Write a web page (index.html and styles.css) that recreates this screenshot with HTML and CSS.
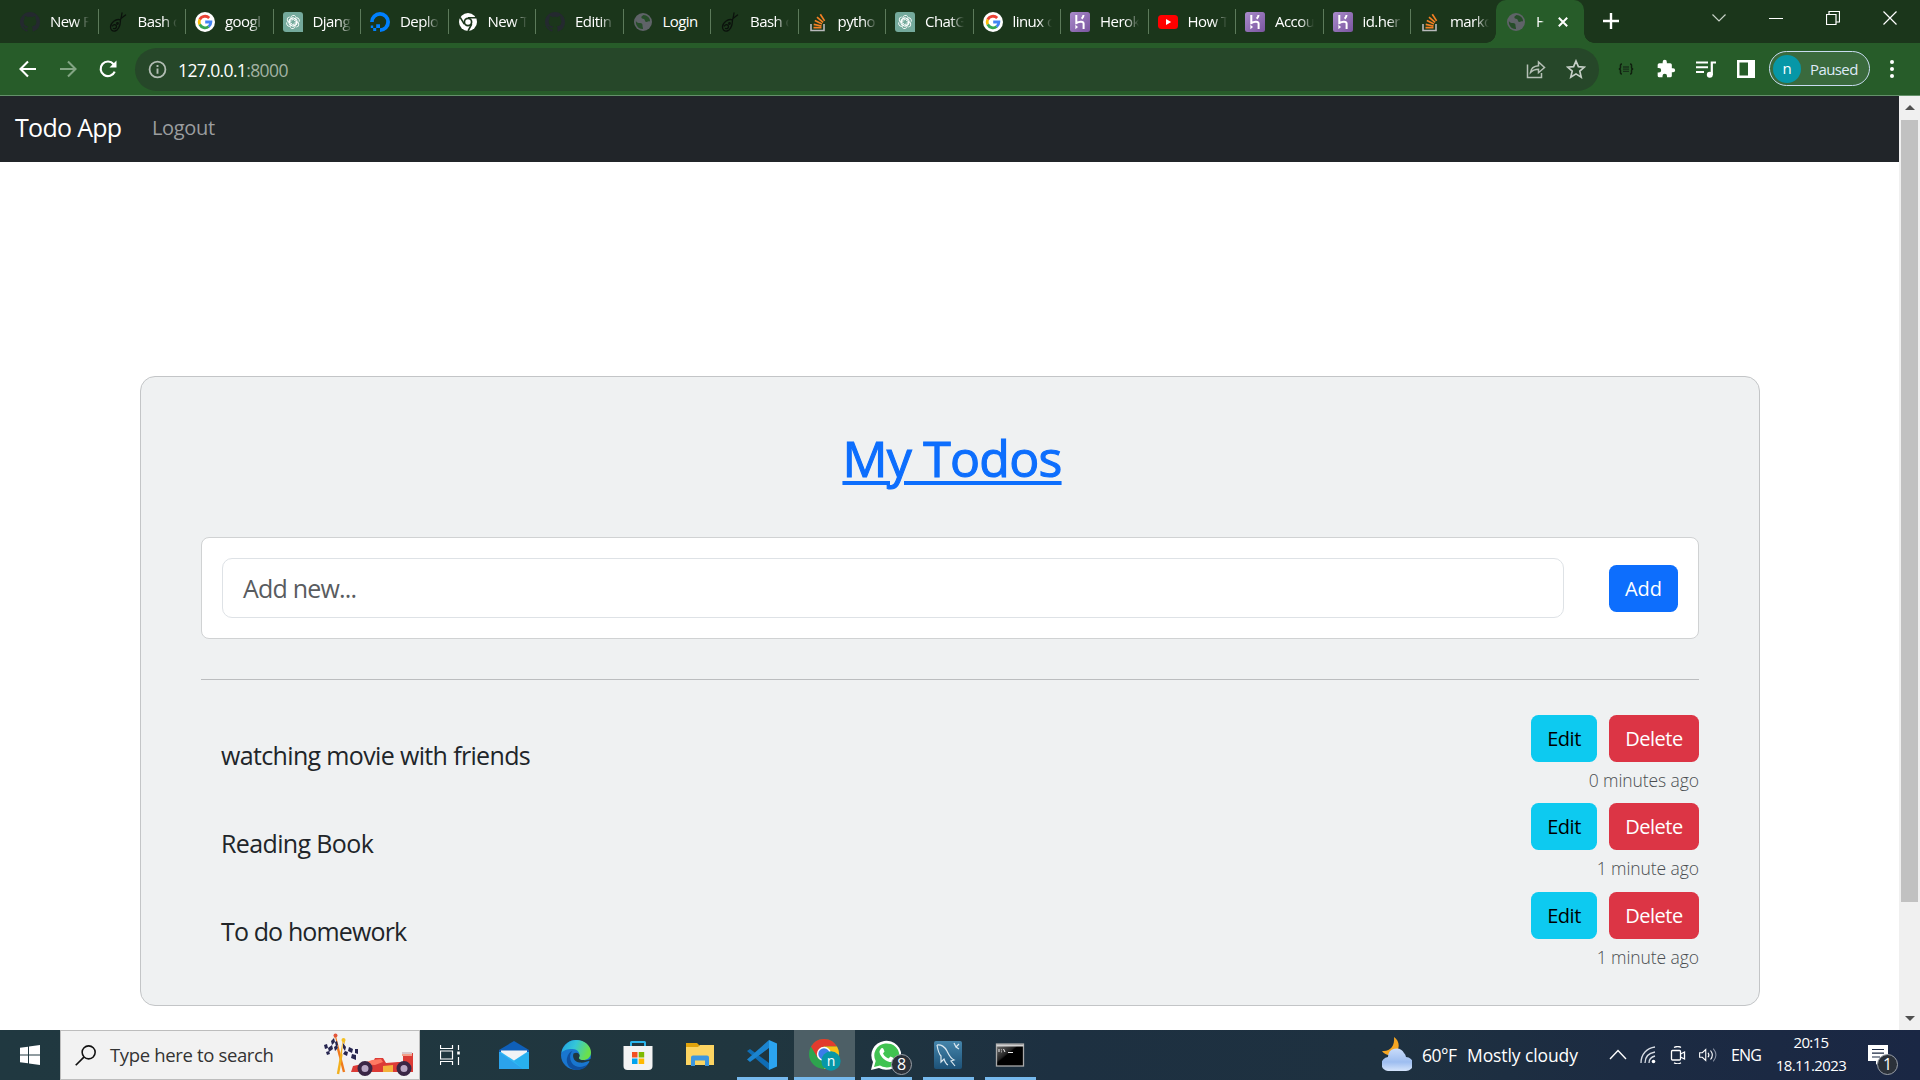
FILE: index.html
```html
<!DOCTYPE html>
<html lang="en">
<head>
<meta charset="utf-8">
<title>Home</title>
<link rel="stylesheet" href="styles.css">
</head>
<body>
<svg width="0" height="0" class="defs">
  <defs>
    <linearGradient id="gHk" x1="0" y1="0" x2="1" y2="1"><stop offset="0" stop-color="#a98bcb"/><stop offset="1" stop-color="#7a559f"/></linearGradient>
    <linearGradient id="gEdge" x1="0" y1="0" x2="1" y2="0.3"><stop offset="0" stop-color="#1f9fe0"/><stop offset=".5" stop-color="#35c6d8"/><stop offset="1" stop-color="#6be04a"/></linearGradient>
    <linearGradient id="gCloud" x1="0" y1="0" x2="0" y2="1"><stop offset="0" stop-color="#c9dcfa"/><stop offset=".6" stop-color="#9dbdf0"/><stop offset="1" stop-color="#d5e4fb"/></linearGradient>
    <linearGradient id="gMy" x1="0" y1="0" x2="0" y2="1"><stop offset="0" stop-color="#4585ab"/><stop offset="1" stop-color="#1d5278"/></linearGradient>
    <linearGradient id="gCmd" x1="0" y1="0" x2="1" y2="1"><stop offset="0" stop-color="#777"/><stop offset=".4" stop-color="#222"/><stop offset=".45" stop-color="#000"/></linearGradient>
    <symbol id="github" viewBox="0 0 16 16"><path fill="#24292f" d="M8 0C3.58 0 0 3.58 0 8c0 3.54 2.29 6.53 5.47 7.59.4.07.55-.17.55-.38 0-.19-.01-.82-.01-1.49-2.01.37-2.53-.49-2.69-.94-.09-.23-.48-.94-.82-1.13-.28-.15-.68-.52-.01-.53.63-.01 1.08.58 1.23.82.72 1.21 1.87.87 2.33.66.07-.52.28-.87.51-1.07-1.78-.2-3.64-.89-3.64-3.95 0-.87.31-1.59.82-2.15-.08-.2-.36-1.02.08-2.12 0 0 .67-.21 2.2.82.64-.18 1.32-.27 2-.27s1.36.09 2 .27c1.53-1.04 2.2-.82 2.2-.82.44 1.1.16 1.92.08 2.12.51.56.82 1.27.82 2.15 0 3.07-1.87 3.75-3.65 3.95.29.25.54.73.54 1.48 0 1.07-.01 1.93-.01 2.2 0 .21.15.46.55.38A8.01 8.01 0 0 0 16 8c0-4.42-3.58-8-8-8z"/></symbol>
    <symbol id="bash" viewBox="0 0 20 20"><g fill="none" stroke="#0b120c" stroke-width="1.3" stroke-linecap="round"><path d="M12.500 8C8 6 2.500 11 2.500 15c0 3 2 4.500 4.500 4s5.500-4 5.500-11M12.500 8c.5-2 1-3 1.500-7M13 6.500l4.500-3.500M4.500 14c1-2 4-1.500 4 .5s-1.500 2.500-3 2"/><circle cx="9.500" cy="11.500" r=".8"/></g></symbol>
    <symbol id="google" viewBox="0 0 20 20"><circle cx="10" cy="10" r="10" fill="#fff"/><g fill="none" stroke-width="2.8"><path stroke="#ea4335" d="M14.2 6A5.9 5.9 0 0 0 4.7 7.6"/><path stroke="#fbbc05" d="M4.7 7.5a5.9 5.9 0 0 0 0 5"/><path stroke="#34a853" d="M4.7 12.4a5.9 5.9 0 0 0 9 2.1"/><path stroke="#4285f4" d="M13.6 14.6A5.9 5.9 0 0 0 15.9 10H10.2"/></g></symbol>
    <symbol id="gpt" viewBox="0 0 20 20"><path d="M3 0h14a3 3 0 0 1 3 3v17H3a3 3 0 0 1-3-3V3a3 3 0 0 1 3-3z" fill="#74aa9c"/><g fill="none" stroke="#fff" stroke-width=".9"><path id="pe" d="M7.800 10V6.200a2.700 2.700 0 0 1 5-1.500M7.800 7.200l2.600-1.500 3.400 2"/><use href="#pe" transform="rotate(60 10 10)"/><use href="#pe" transform="rotate(120 10 10)"/><use href="#pe" transform="rotate(180 10 10)"/><use href="#pe" transform="rotate(240 10 10)"/><use href="#pe" transform="rotate(300 10 10)"/></g></symbol>
    <symbol id="ocean" viewBox="0 0 20 20"><path d="M10 18.1A8.1 8.1 0 1 0 1.9 10" fill="none" stroke="#0080ff" stroke-width="3.8"/><path fill="#0080ff" d="M6.2 12.2H10V16H6.2zM3.2 16h3v3h-3zM.8 13.6h2.4V16H.8z"/></symbol>
    <symbol id="chromeW" viewBox="0 0 20 20"><circle cx="10" cy="10" r="9" fill="#fff"/><circle cx="10" cy="10" r="3.6" fill="#fff" stroke="#1b361b" stroke-width="1.7"/><path d="M10 5.7h8M6.3 12.2 2.2 5.3M13.7 12.2 10 19" stroke="#1b361b" stroke-width="1.6"/></symbol>
    <symbol id="globe" viewBox="0 0 20 20"><circle cx="10" cy="10" r="9" fill="#5f6368"/><path d="M3 8.500c0 2 2 2.500 4 2.500s2.500 1 2.500 2.500.5 2 .5 3.500C5.500 17.500 2 13 3 8.500zM10.500 3c-1.500 1-2.500 1.500-2 3 .5 1 2.500.5 3 1.500s.5 2.500 2 2.500 2-1 3.500-.5C17.500 6 14 3 10.500 3z" fill="#264d29"/></symbol>
    <symbol id="so" viewBox="0 0 20 20"><path d="M3 12v6.5h13V12" fill="none" stroke="#b9babc" stroke-width="1.6"/><g stroke="#f48024" stroke-width="1.7"><path d="M5.5 15.6h8M5.7 12.3l7.8 1.7M6.8 8.6l7.2 3.4M9 5.2l6.1 5.2M12.3 2.3l4.3 6.6"/></g></symbol>
    <symbol id="heroku" viewBox="0 0 20 20"><rect width="20" height="20" rx="2.5" fill="url(#gHk)"/><path d="M6.3 3v8c2-1 7-2.5 7.3.5V17M13.5 3c0 1.5-.7 2.6-1.8 3.8" fill="none" stroke="#fff" stroke-width="2"/><path d="M5.4 12.8 8 15l-2.6 2.3z" fill="#fff"/></symbol>
    <symbol id="yt" viewBox="0 0 20 20"><rect y="3" width="20" height="14" rx="3.5" fill="#f00"/><path d="M8 7l5.2 3L8 13z" fill="#fff"/></symbol>
  </defs>
</svg>

<header class="tabs">
  <div class="tab"><svg><use href="#github"/></svg><span>New F</span></div>
  <div class="tab"><svg><use href="#bash"/></svg><span>Bash c</span></div>
  <div class="tab"><svg><use href="#google"/></svg><span>googl</span></div>
  <div class="tab"><svg><use href="#gpt"/></svg><span>Djang</span></div>
  <div class="tab"><svg><use href="#ocean"/></svg><span>Deplo</span></div>
  <div class="tab"><svg><use href="#chromeW"/></svg><span>New T</span></div>
  <div class="tab"><svg><use href="#github"/></svg><span>Editin</span></div>
  <div class="tab"><svg><use href="#globe"/></svg><span class="full">Login</span></div>
  <div class="tab"><svg><use href="#bash"/></svg><span>Bash c</span></div>
  <div class="tab"><svg><use href="#so"/></svg><span>pytho</span></div>
  <div class="tab"><svg><use href="#gpt"/></svg><span>ChatG</span></div>
  <div class="tab"><svg><use href="#google"/></svg><span>linux c</span></div>
  <div class="tab"><svg><use href="#heroku"/></svg><span>Herok</span></div>
  <div class="tab"><svg><use href="#yt"/></svg><span>How T</span></div>
  <div class="tab"><svg><use href="#heroku"/></svg><span>Accou</span></div>
  <div class="tab"><svg><use href="#heroku"/></svg><span>id.her</span></div>
  <div class="tab last"><svg><use href="#so"/></svg><span>markc</span></div>
  <div class="tab active"><svg><use href="#globe"/></svg><span>H</span><svg class="x" viewBox="0 0 10 10"><path d="M.8.8l8.4 8.4M9.200.8.8 9.200" stroke="#fff" stroke-width="2"/></svg></div>
  <svg class="plus" viewBox="0 0 16 16"><path d="M8 0v16M0 8h16" stroke="#fff" stroke-width="2.4"/></svg>
  <div class="winctl">
    <svg viewBox="0 0 14 14"><path d="M.5 3.500l6.500 6.500 6.500-6.500" fill="none" stroke="#c8d2c8" stroke-width="1.200"/></svg>
    <svg viewBox="0 0 14 14"><path d="M0 7.500h14" stroke="#fff"/></svg>
    <svg viewBox="0 0 14 14"><path d="M.5 3.500h9.500v10H.5zM3 3.500v-3h10.500v10.500H10" fill="none" stroke="#fff" stroke-width="1.200"/></svg>
    <svg viewBox="0 0 14 14"><path d="M.5.5l13 13M13.500.5l-13 13" stroke="#fff" stroke-width="1.200"/></svg>
  </div>
</header>

<div class="toolbar">
  <div class="navbtns">
    <svg viewBox="0 0 20 20"><path d="M18 10H3M10 2.500L2.500 10l7.500 7.500" fill="none" stroke="#fff" stroke-width="2.100"/></svg>
    <svg viewBox="0 0 20 20"><path d="M2 10h15M10 2.500L17.500 10 10 17.500" fill="none" stroke="#83a584" stroke-width="2.100"/></svg>
    <svg viewBox="0 0 20 20"><path d="M16.700 12.600A7.300 7.300 0 1 1 15.600 5.200" fill="none" stroke="#fff" stroke-width="2.200"/><path d="M18.500 1.500v7h-7z" fill="#fff"/></svg>
  </div>
  <div class="omni">
    <svg class="info" viewBox="0 0 18 18"><circle cx="9" cy="9" r="7.500" fill="none" stroke="#b2bdb4" stroke-width="1.700"/><path d="M9 8v5M9 4.800v1.800" stroke="#b2bdb4" stroke-width="1.800"/></svg>
    <span class="url">127.0.0.1<em>:8000</em></span>
    <svg class="share" viewBox="0 0 20 20"><path d="M1.500 5.500v13h14V14M4.500 13.500c.5-4 3-6.500 8-6.800V3l6 5.500-6 5.200v-3.500c-4 0-6 1-8 3.300z" fill="none" stroke="#b5c0b6" stroke-width="1.500"/></svg>
    <svg class="star" viewBox="0 0 20 20"><path d="M10 2l2.400 5.600 6 .5-4.600 4 1.400 6-5.200-3.200-5.200 3.200 1.400-6-4.600-4 6-.5z" fill="none" stroke="#c6cfc7" stroke-width="1.700"/></svg>
  </div>
  <div class="ext">
    <span class="json"><svg viewBox="0 0 16 12"><path d="M4 1C2 1 2.500 3 2.500 4.500S1.500 6 .8 6c.7 0 1.700 0 1.700 1.500S2 11 4 11M12 1c2 0 1.500 2 1.500 3.500s1 1.500 1.700 1.500c-.7 0-1.700 0-1.700 1.500S14 11 12 11" fill="none" stroke="#10200f" stroke-width="1.500"/><path d="M5 4h6M5 6.200h6M5 8.400h6" stroke="#18301a" stroke-width="1.300"/></svg></span>
    <svg viewBox="0 0 24 24"><path fill="#fff" d="M20.500 11H19V7a2 2 0 0 0-2-2h-4V3.500a2.500 2.500 0 0 0-5 0V5H4a2 2 0 0 0-2 2v3.800h1.500a2.700 2.700 0 0 1 0 5.400H2V20a2 2 0 0 0 2 2h3.800v-1.500a2.700 2.700 0 0 1 5.400 0V22H17a2 2 0 0 0 2-2v-4h1.500a2.500 2.500 0 0 0 0-5z"/></svg>
    <svg viewBox="0 0 20 20"><path d="M0 3.500h12M0 8.200h12M0 13h8" stroke="#fff" stroke-width="2"/><path d="M15.800 16V3.500H20" fill="none" stroke="#fff" stroke-width="2.200"/><circle cx="13.800" cy="15.800" r="3" fill="#fff"/></svg>
    <svg viewBox="0 0 20 20"><path fill="#fff" fill-rule="evenodd" d="M1 1h18v18H1zM3.500 3.500v13H12v-13z"/></svg>
  </div>
  <div class="pill"><b>n</b><span>Paused</span></div>
  <svg class="dots" viewBox="0 0 6 20"><circle cx="3" cy="3" r="2"/><circle cx="3" cy="10" r="2"/><circle cx="3" cy="17" r="2"/></svg>
</div>

<main class="view">
  <div class="page">
    <nav class="navbar"><a class="brand">Todo App</a><a class="logout">Logout</a></nav>
    <section class="card">
      <h1><u>My Todos</u></h1>
      <form class="add">
        <div class="field">Add new...</div>
        <div class="btn blue">Add</div>
      </form>
      <hr>
      <ul>
        <li><p class="t1">watching movie with friends</p><div class="side"><div class="acts"><a class="btn cyan">Edit</a><a class="btn red">Delete</a></div><small>0 minutes ago</small></div></li>
        <li><p class="t2">Reading Book</p><div class="side"><div class="acts"><a class="btn cyan">Edit</a><a class="btn red">Delete</a></div><small>1 minute ago</small></div></li>
        <li><p class="t3">To do homework</p><div class="side"><div class="acts"><a class="btn cyan">Edit</a><a class="btn red">Delete</a></div><small>1 minute ago</small></div></li>
      </ul>
    </section>
  </div>
  <div class="scroll"><i class="up"></i><i class="thumb"></i><i class="down"></i></div>
</main>

<footer class="taskbar">
  <div class="start"><svg viewBox="0 0 20 20"><path fill="#fff" d="M0 2.800l8-1.100v7.800H0zM9 1.500L20 0v9.500H9zM0 10.500h8v7.800l-8-1.100zM9 10.500h11V20L9 18.500z"/></svg></div>
  <div class="search">
    <svg class="mag" viewBox="0 0 20 20"><circle cx="13" cy="7" r="6.200" fill="none" stroke="#111" stroke-width="1.500"/><path d="M8.500 11.500L.7 19.300" stroke="#111" stroke-width="1.600"/></svg>
    <span>Type here to search</span>
    <svg class="race" viewBox="0 0 90 44">
      <path d="M12 4l9 35" stroke="#f07a1c" stroke-width="2.400"/><path d="M21 7l-6 34" stroke="#f2b01e" stroke-width="2.400"/>
      <circle cx="12.500" cy="2.500" r="2" fill="#e2553a"/><circle cx="20.500" cy="7" r="2" fill="#f4c022"/>
      <path d="M1 12q6 0 11-8l3 11q-4 6-11 7z" fill="#f4f4fa"/><path d="M20 9q4 8 15 7l-1 11q-10-1-15-6z" fill="#f4f4fa"/>
      <path d="M1 12l3-1 1 4-3 1zM8 8l3-3 1 4-3 3zM5 15l4-3 1 4-4 3zM12 9l2-1 1 4-2 2zM3 19l3-1 1 3-3 1zM11 14l3-2 1 3-3 3zM20 10l3 4-1 4-2-3zM26 14l4 2-1 4-4-2zM22 18l3 1-1 4-4-2zM29 21l4 1v5l-5-2zM32 16h3v5l-3-1z" fill="#27264f"/>
      <path d="M28 39l2-6 14-3 4-5 10-1 6 4 8-8h16v19z" fill="none"/><path d="M28 39l2-6 14-3 6-1 2-4 8 0 3 5 12-1h5V20h10v19z" fill="#dc3b36"/><path d="M38 31l14 1 8-3-2-3-9 1z" fill="#ff7a63"/><path d="M60 33l10-1v7H60z" fill="#f4b23a"/><path d="M79 19h10v4H79z" fill="#d8c8cc"/><path d="M79 21h10v2H79z" fill="#f2a08a"/>
      <g fill="#b9a7c4" stroke="#3a2645" stroke-width="4"><circle cx="42" cy="35.500" r="5.500"/><circle cx="81" cy="35.500" r="5.500"/></g>
    </svg>
  </div>
  <div class="app tv"><svg class="tvi" viewBox="0 0 20 20"><path d="M.5 0v3.500h12V0M.5 20v-3.500h12V20M.500 6h12v8H.5zM18.500 0v5M18.500 12v8" fill="none" stroke="#fff" stroke-width="1.200"/><path d="M17.200 6.500h2.600v3h-2.600z" fill="#fff"/></svg></div>
  <div class="app"><svg viewBox="0 0 30 30"><path d="M0 10L15 1l15 9v5H0z" fill="#0f5fb8"/><path d="M0 12h30v17H0z" fill="#30b6f5"/><path d="M0 12l24 17H0z" fill="#2ba3ec"/><path d="M30 12v17h-6l-9-8z" fill="#28b0ee"/><path d="M2 10.500h26v1.500L15 20.500 2 12z" fill="#f1f3f6"/></svg></div>
  <div class="app"><svg viewBox="0 0 30 30"><circle cx="15" cy="15" r="15" fill="#1976cf"/><path d="M.5 13C2 4 9 0 15 0c9 0 15 6 15 12.500 0 5-4 7.500-8 7.500-4 0-5.500-1.500-4-3.500 1.500-3-1-7.500-6.500-7.500C6 9 2 10.500.5 13z" fill="url(#gEdge)"/><path d="M11.500 11c-4 4-3 12 3 15 4.500 2 9 .5 13-2A15 15 0 0 1 15 30C7 29 5 22 6 18s3-6.500 5.500-7z" fill="#0f4f9e"/><path d="M12.500 13.500c-1.500 4 1 8.500 6 9 4 .5 7-.5 9-1.500l2 1 1-3.500c-2 1.500-5 2-8 1.500-4 0-5.500-1.500-4-3.500 1-2-2-5.500-6-3z" fill="#203840"/></svg></div>
  <div class="app"><svg viewBox="0 0 30 30"><path d="M8 7V2.500Q8 2 8.500 2h13q.5 0 .5.500V7" fill="none" stroke="#2bb5ec" stroke-width="2"/><path d="M0.500 6h29v20a4 4 0 0 1-4 4h-21a4 4 0 0 1-4-4z" fill="#f3f3f3"/><path d="M9 12h5.500v5.500H9z" fill="#f25022"/><path d="M15.700 12h5.500v5.500h-5.500z" fill="#7fba00"/><path d="M9 18.500h5.500V24H9z" fill="#00a4ef"/><path d="M15.700 18.500h5.500V24h-5.500z" fill="#ffb900"/></svg></div>
  <div class="app"><svg viewBox="0 0 30 30"><path d="M1 3h11l3 3-2 3H1z" fill="#e0a30c"/><path d="M1 7h12l2-2h14v20H1z" fill="#fcd462"/><path d="M6 26v-8.500a2 2 0 0 1 2-2h14a2 2 0 0 1 2 2V26h-4v-5.500h-10V26z" fill="#3d97e0"/></svg></div>
  <div class="app run"><svg viewBox="0 0 30 30"><path d="M0 11l3-2 19 14v7z" fill="#0f6db5"/><path d="M22 0v8L3 22l-3-2.500z" fill="#1b84cf"/><path d="M22 0l8 3.500v23L22 30z" fill="#2ba4f0"/><path d="M22 8.500v13L13.500 15z" fill="#20363f"/></svg></div>
  <div class="app run hot"><svg viewBox="0 0 32 32"><circle cx="15" cy="15" r="15" fill="#2da44e"/><path d="M2 7.500A15 15 0 0 1 28 7.500H15l-6.500 11z" fill="#e33b2e"/><path d="M28 7.500A15 15 0 0 1 15 30l6.500-11.500L15 7.500z" fill="#fbc116"/><circle cx="15" cy="15" r="7.200" fill="#fff"/><circle cx="15" cy="15" r="5.700" fill="#3b7de8"/><circle cx="22" cy="22" r="9.700" fill="#0797a7"/></svg><span class="cn">n</span></div>
  <div class="app run"><svg viewBox="0 0 30 30"><path d="M0 30l2-8A15 14.500 0 1 1 8 28z" fill="#fff"/><path d="M3 27l1.700-6A12.500 12 0 1 1 9 25.500z" fill="#40c351"/><path d="M10 8.500c1-1 2-.5 2.500.5l1 2.500-1.500 2c1.500 3 3.500 4.300 5.500 5l2-2 4 2c0 3-3 4-5 3.500C13 20.500 8 15 8.500 11z" fill="#fff"/></svg><span class="badge">8</span></div>
  <div class="app run"><svg viewBox="0 0 30 30"><rect x="1" y="1" width="28" height="28" rx="2" fill="url(#gMy)"/><path d="M4 5c4-1 8 2 10 6s3 7 7 9l-3 1 4 5M4 5c1 6 2 9 4 11v6l3-3c1 3 2 5 4 6M21 3l2 4 3 2M26 4l-3 3" fill="none" stroke="#dbe8f0" stroke-width="1.200"/></svg></div>
  <div class="app run"><svg viewBox="0 0 30 30"><rect x="1.500" y="4" width="27" height="22" fill="url(#gCmd)" stroke="#a9a9a9" stroke-width="1.300"/><path d="M1.500 5.500h27" stroke="#d2d2d2" stroke-width="2"/><path d="M4 9v3M6.500 9.500v.8M6.500 11.500v.8M8.500 9l1.500 3M13 12.500h5" stroke="#eee" stroke-width="1"/></svg></div>
  <div class="weather">
    <svg viewBox="0 0 30 34"><path d="M12 0c6 4 7 13-1 18-5 1-9-1-11-4 8 1 13-5 12-14z" fill="#f5a623"/><path d="M7 34a7 7 0 0 1-1-14 8.500 8.500 0 0 1 16-4 7 7 0 0 1 2 4 7 7 0 0 1 0 14z" fill="url(#gCloud)"/></svg>
    <span class="deg">60°F</span><span class="cond">Mostly cloudy</span>
  </div>
  <div class="tray">
    <svg viewBox="0 0 18 18"><path d="M1 13l8-8.500 8 8.500" fill="none" stroke="#fff" stroke-width="1.400"/></svg>
    <svg viewBox="0 0 18 18"><g fill="none" stroke="#d8dde5" stroke-width="1.300"><path d="M2 17C2 8 8 2 16 1M6 17c0-6 4-10 10-11M10 17c0-4 2-6 6-7"/></g><circle cx="14.500" cy="15.500" r="1.800" fill="#fff"/></svg>
    <svg viewBox="0 0 18 18"><g fill="none" stroke="#fff" stroke-width="1.300"><rect x="2.500" y="4.500" width="9" height="9.500" rx="1"/><path d="M11.500 8l4-2v7l-4-2M5 1.500q4-2 7 0M5 16.800q4 2 7 0"/></g></svg>
    <svg viewBox="0 0 20 18"><g fill="none" stroke="#fff" stroke-width="1.200"><path d="M.7 6.500h3L7.500 3v12l-3.800-3.500h-3z"/><path d="M10 6.500q2 2.500 0 5M12.800 4q4 5 0 10"/><path d="M15.800 2q6 7 0 14" stroke="#8790a2"/></g></svg>
  </div>
  <span class="lang">ENG</span>
  <div class="clock"><span>20:15</span><span class="date">18.11.2023</span></div>
  <div class="note"><svg viewBox="0 0 20 20"><path d="M0 0h20v16h-9l-3 4v-4H0z" fill="#fff"/><path d="M4 4.500h12M4 8.200h12M4 12h8" stroke="#1b2842" stroke-width="1.200"/></svg><span class="badge">1</span></div>
</footer>
</body>
</html>
```
FILE: styles.css
```css
* { box-sizing: border-box; }
body { margin: 0; width: 1920px; height: 1080px; overflow: hidden; display: flex; flex-direction: column; background: #fff; font-family: "Open Sans", "Noto Sans", sans-serif; color: #212529; }
svg { display: block; flex: none; }
.defs { position: absolute; }

.tabs { height: 43px; flex: none; display: flex; background: #1b361b; padding-left: 11px; }
.tab { width: 87.5px; height: 43px; flex: none; display: flex; align-items: center; padding-left: 9px; position: relative; }
.tab svg { width: 20px; height: 20px; }
.tab span { margin-left: 10px; width: 39px; white-space: nowrap; color: #fff; font-size: 15px; line-height: 20px; letter-spacing: -.55px; margin-top: -1px; -webkit-mask-image: linear-gradient(90deg, #000 65%, transparent); mask-image: linear-gradient(90deg, #000 65%, transparent); }
.tab span.full { -webkit-mask-image: none; mask-image: none; }
.tab::after { content: ""; position: absolute; right: 0; top: 9px; width: 1px; height: 25px; background: #5c7a5a; }
.tab.last::after { display: none; }
.tab.active { background: #275c29; border-radius: 10px 10px 0 0; width: 88px; margin-left: -2.5px; padding-left: 10px; }
.tab.active::before, .tab.active::after { content: ""; display: block; position: absolute; top: auto; bottom: 0; width: 10px; height: 10px; background: radial-gradient(circle at 0 0, transparent 9.5px, #275c29 10px); }
.tab.active::before { left: -10px; }
.tab.active::after { right: -10px; background: radial-gradient(circle at 100% 0, transparent 9.5px, #275c29 10px); }
.tab.active span { width: 8px; }
.tab.active .x { width: 10px; height: 10px; margin-left: 14px; }
.plus { width: 16px; height: 16px; margin: 13px 0 0 19px; }
.winctl { display: flex; gap: 43px; margin: 11px 0 0 93px; }
.winctl svg { width: 14px; height: 14px; }

.toolbar { height: 53px; flex: none; display: flex; align-items: center; background: #275c29; border-bottom: 1px solid #64916a; padding-left: 18px; }
.navbtns { display: flex; gap: 20px; width: 117px; }
.navbtns svg { width: 20px; height: 20px; margin-top: -1px; }
.omni { width: 1464px; height: 43px; border-radius: 22px; background: #264729; display: flex; align-items: center; padding: 0 13px 0 13px; margin-top: 1px; }
.info { width: 19px; height: 19px; }
.url { flex: 1; margin-left: 11px; font-size: 17.5px; color: #fff; letter-spacing: -.62px; line-height: 24px; }
.url em { font-style: normal; color: #a3b3a4; }
.share, .star { width: 20px; height: 20px; margin-top: -1px; }
.star { margin-left: 20px; }
.ext { display: flex; align-items: center; gap: 20px; margin: -1px 0 0 17px; }
.ext svg { width: 20px; height: 20px; }
.ext .json { width: 20px; display: flex; justify-content: center; }
.ext .json svg { width: 16px; height: 12px; }
.pill { width: 101px; height: 35px; margin: -1px 0 0 13px; border: 1.5px solid #c9dcf0; border-radius: 18px; background: #3a6a3d; display: flex; align-items: center; padding-left: 3px; color: #dfeaf8; font-size: 15px; }
.pill b { width: 28px; height: 28px; border-radius: 50%; background: #0797a7; color: #fff; font-weight: 400; text-align: center; line-height: 26px; }
.pill span { margin-left: 9px; letter-spacing: -.6px; }
.dots { width: 6px; height: 20px; margin: -1px 0 0 19px; fill: #fff; }

.view { height: 934px; flex: none; display: flex; }
.page { width: 1899px; }
.navbar { height: 66px; background: #212529; display: flex; align-items: center; padding-left: 15px; }
.brand { width: 137px; font-size: 25px; color: #fff; letter-spacing: -.7px; margin-top: -4px; }
.logout { font-size: 20px; color: #9b9d9f; letter-spacing: -.35px; margin-top: -3px; }
.card { margin: 214px 0 0 140px; width: 1620px; height: 630px; background: #eff1f2; border: 1px solid #c3c5c7; border-radius: 15px; padding: 47px 60px 0; }
h1 { margin: 0; height: 113px; font-size: 50px; line-height: 68px; font-weight: 500; text-align: center; color: #0d6efd; padding-left: 4px; letter-spacing: -.75px; -webkit-text-stroke: 1.1px #0d6efd; }
h1 u { text-decoration-thickness: 4px; text-underline-offset: 4px; }
.add { width: 1498px; height: 102px; border: 1px solid #d0d2d3; border-radius: 8px; background: #fff; display: flex; align-items: center; justify-content: space-between; padding: 0 20px; }
.field { width: 1342px; height: 60px; border: 1px solid #dee2e6; border-radius: 10px; padding-left: 20px; font-size: 25px; line-height: 59px; letter-spacing: -.8px; color: #595c5f; }
hr { margin: 40px 0 35px; width: 1498px; height: 1px; border: 0; background: #bbbdbf; }
.btn { height: 47px; border-radius: 7.5px; font-size: 20px; line-height: 48px; text-align: center; display: block; letter-spacing: -.5px; }
.blue { width: 69px; background: #0d6efd; color: #fff; letter-spacing: -.1px; }
.cyan { width: 66px; background: #0dcaf0; color: #000; }
.red { width: 90px; background: #dc3545; color: #fff; }
ul { margin: 0; padding: 0; list-style: none; }
li { height: 88.4px; width: 1498px; display: flex; justify-content: space-between; }
li p { margin: 21px 0 0 20px; font-size: 25px; line-height: 38px; }
.t1 { letter-spacing: -.65px; }
.t2 { letter-spacing: -.63px; }
.t3 { letter-spacing: -.87px; margin-top: 20px; }
.side { display: flex; flex-direction: column; align-items: flex-end; }
.acts { display: flex; gap: 12px; }
small { font-size: 17.5px; line-height: 26px; margin-top: 5px; color: #4a4e51; font-weight: 300; letter-spacing: -.08px; }
.scroll { width: 21px; background: #f0f0f0; display: flex; flex-direction: column; align-items: center; }
.up, .down { width: 0; height: 0; border: 5px solid transparent; }
.up { border-top: 0; border-bottom-color: #505050; margin: 9px 0 10px; }
.thumb { width: 17px; height: 782px; background: #c1c1c1; }
.down { border-bottom: 0; border-top-color: #505050; margin-top: 114px; }

.taskbar { height: 50px; flex: none; display: flex; background: linear-gradient(90deg, #203840 0, #20363f 40%, #1d3041 55%, #1e3140 72%, #1c2b42 85%, #1a2744 100%); color: #fff; }
.start { width: 60px; display: flex; align-items: center; justify-content: center; }
.start svg { width: 20px; height: 20px; }
.search { width: 360px; height: 50px; background: #f2f2f2; border: 1px solid #bdbdbd; display: flex; align-items: center; padding-left: 14px; color: #333; font-size: 18.5px; }
.mag { width: 21px; height: 21px; }
.search span { margin: -2px 0 0 14px; width: 213px; white-space: nowrap; letter-spacing: -.35px; }
.race { width: 90px; height: 44px; }
.app { width: 62px; height: 50px; display: flex; align-items: center; justify-content: center; position: relative; flex: none; }
.app svg { width: 30px; height: 30px; }
.app.tv { width: 63px; padding-right: 3px; }
.app .tvi { width: 20px; height: 20px; }
.run::after { content: ""; position: absolute; left: 6px; right: 5px; bottom: 0; height: 3px; background: #76b9ed; }
.hot { background: #4d5f66; width: 61px; margin: 0 0 0 1px; }
.hot::after { left: 0; right: 0; }
.hot svg { width: 32px; height: 32px; }
.cn { position: absolute; left: 32px; top: 19px; font-size: 14px; line-height: 24px; width: 10px; text-align: center; }
.badge { position: absolute; width: 21px; height: 21px; border-radius: 50%; background: #2b3139; border: 1px solid #9aa0a8; font-size: 16px; line-height: 18px; text-align: center; }
.app .badge { left: 36px; top: 24px; }
.weather { display: flex; align-items: center; margin-left: 341px; font-size: 17.5px; }
.weather svg { width: 30px; height: 34px; margin-top: -2px; }
.deg { margin-left: 10px; width: 45px; letter-spacing: -.5px; }
.cond { width: 142px; white-space: nowrap; letter-spacing: -.1px; }
.tray { display: flex; align-items: center; gap: 12px; width: 122px; }
.tray svg { width: 18px; height: 18px; }
.lang { font-size: 16px; line-height: 50px; width: 45px; letter-spacing: -.8px; }
.clock { width: 70px; display: flex; flex-direction: column; align-items: center; font-size: 15px; line-height: 23px; padding-top: 1px; letter-spacing: -.62px; }
.note { position: relative; margin: 15px 0 0 22px; }
.note svg { width: 20px; height: 20px; }
.note .badge { left: 9px; top: 9px; }
```
